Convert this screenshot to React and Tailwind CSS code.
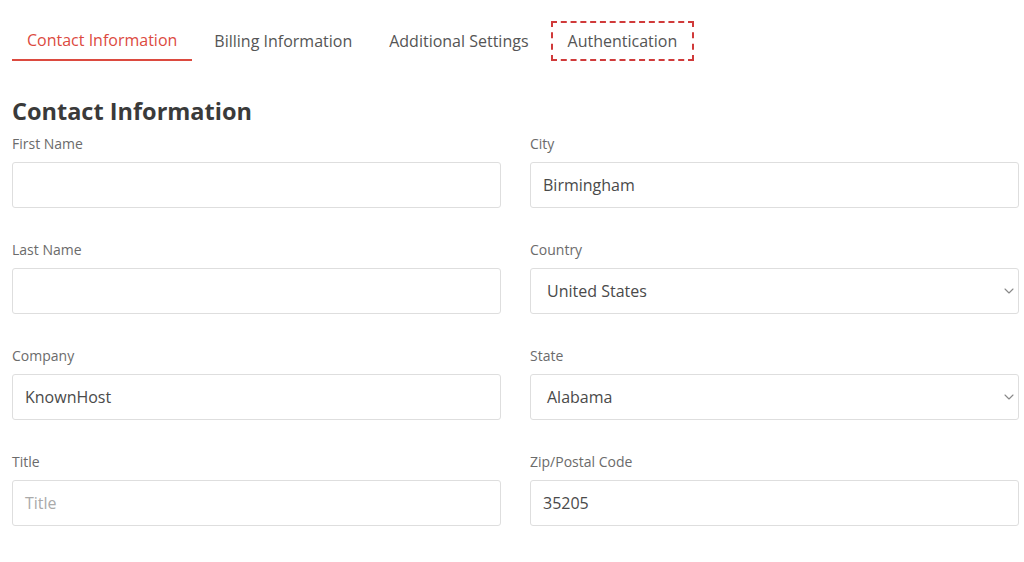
import { ChevronDown } from 'lucide-react';

const font = { fontFamily: '"Open Sans", "Liberation Sans", sans-serif' };

function Field({ label, value, placeholder }) {
  return (
    <div className="flex flex-col">
      <label className="text-[14px] leading-[18px] text-[#6b6b6b] mb-[9px]">{label}</label>
      <div className="h-[46px] border border-[#dedede] rounded-[3px] bg-white flex items-center px-[12px]">
        {value ? (
          <span className="text-[16px] text-[#4a4a4a]">{value}</span>
        ) : (
          <span className="text-[16px] text-[#aaa]">{placeholder}</span>
        )}
      </div>
    </div>
  );
}

function SelectField({ label, value }) {
  return (
    <div className="flex flex-col">
      <label className="text-[14px] leading-[18px] text-[#6b6b6b] mb-[9px]">{label}</label>
      <div className="h-[46px] border border-[#dedede] rounded-[3px] bg-white flex items-center justify-between pl-[16px] pr-[1px]">
        <span className="text-[16px] text-[#4a4a4a]">{value}</span>
        <ChevronDown size={16} strokeWidth={1.6} className="text-[#888]" />
      </div>
    </div>
  );
}

export default function App() {
  const tabs = ['Contact Information', 'Billing Information', 'Additional Settings', 'Authentication'];

  return (
    <div className="min-h-screen bg-white pl-[12px] pr-[5px]" style={font}>
      {/* Tabs */}
      <div className="flex gap-[7px] pt-[21px]">
        {tabs.map((t, i) => (
          <div
            key={t}
            className={
              i === 0
                ? 'h-[40px] px-[15px] flex items-center text-[16px] text-[#dc4a3f] border-b-2 border-[#dc4a3f]'
                : i === 3
                ? 'h-[40px] px-[15px] flex items-center text-[16px] text-[#555] border-2 border-dashed border-[#d03a3a]'
                : 'h-[40px] px-[15px] flex items-center text-[16px] text-[#555]'
            }
          >
            {t}
          </div>
        ))}
      </div>

      <h1 className="mt-[34px] text-[23.5px] leading-[32px] font-bold text-[#3a3a3a]">Contact Information</h1>

      <div className="grid grid-cols-2 gap-x-[29px] gap-y-[33px] mt-[8px]">
        <Field label="First Name" />
        <Field label="City" value="Birmingham" />
        <Field label="Last Name" />
        <SelectField label="Country" value="United States" />
        <Field label="Company" value="KnownHost" />
        <SelectField label="State" value="Alabama" />
        <Field label="Title" placeholder="Title" />
        <Field label="Zip/Postal Code" value="35205" />
      </div>
    </div>
  );
}
